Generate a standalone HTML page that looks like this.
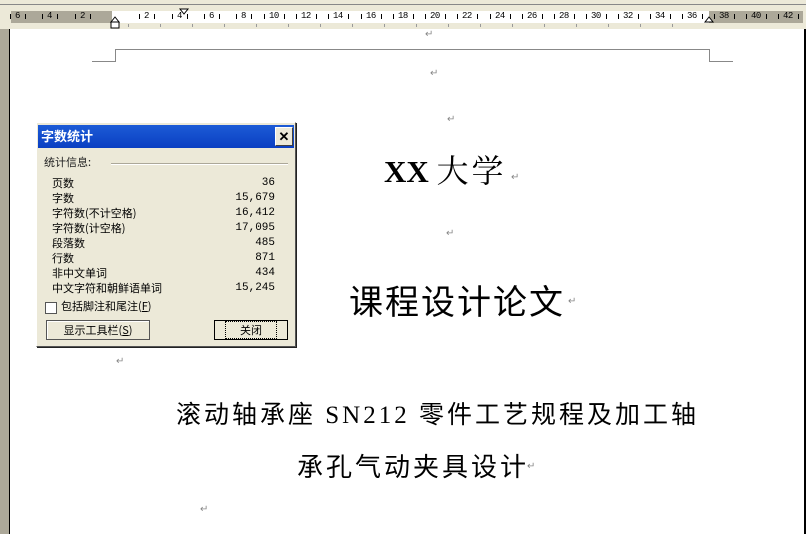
<html><head><style>
body{margin:0;width:806px;height:534px;overflow:hidden;background:#fff;position:relative;font-family:"Liberation Sans","Noto Sans CJK SC",sans-serif}
.a{position:absolute}
.pm{position:absolute;font-size:10px;color:#888;font-family:"Liberation Sans",sans-serif}
.rl{position:absolute;top:11px;font-size:9px;color:#000;font-family:"Liberation Mono",monospace;letter-spacing:-0.5px}
.dl{position:absolute;font-size:11px;font-family:"Noto Sans CJK SC",sans-serif;line-height:15px}
</style></head><body>
<div class="a" style="left:0;top:0;width:806px;height:29px;background:#ece9d8"></div>
<div class="a" style="left:0;top:4px;width:806px;height:1px;background:#888"></div>
<div class="a" style="left:11px;top:11px;width:101px;height:12px;background:#aca899"></div>
<div class="a" style="left:112px;top:11px;width:597px;height:12px;background:#fff"></div>
<div class="a" style="left:709px;top:11px;width:94px;height:12px;background:#aca899"></div>
<div class="a" style="left:0;top:29px;width:9px;height:505px;background:#aca899"></div>
<div class="a" style="left:9px;top:29px;width:1px;height:505px;background:#000"></div>
<div class="a" style="left:804px;top:29px;width:2px;height:505px;background:#000"></div>
<div id="ruler"></div>
<script>
var r=document.getElementById('ruler'),h='';
var labs=[[18,'6'],[50,'4'],[83,'2'],[147,'2'],[180,'4'],[212,'6'],[244,'8'],[272,'10'],[304,'12'],[336,'14'],[369,'16'],[401,'18'],[433,'20'],[465,'22'],[498,'24'],[530,'26'],[562,'28'],[594,'30'],[626,'32'],[658,'34'],[690,'36'],[722,'38'],[754,'40'],[786,'42']];
labs.forEach(function(l){h+='<div class="rl" style="left:'+(l[0]-3)+'px">'+l[1]+'</div>';h+='<div class="a" style="left:'+(l[0]-8)+'px;top:14px;width:1px;height:5px;background:#000"></div><div class="a" style="left:'+(l[0]+(l[1].length*5)+2)+'px;top:14px;width:1px;height:5px;background:#000"></div>';});
for(var x=128;x<700;x+=32)h+='<div class="a" style="left:'+x+'px;top:24px;width:1px;height:3px;background:#999"></div>';
r.innerHTML=h;
</script>
<svg class="a" style="left:108px;top:6px" width="720" height="26"><path d="M3 16 L7 11 L11 16 Z M3 16 H11 V22 H3 Z" fill="#fff" stroke="#000"/><path d="M72 3 H80 L76 8 Z" fill="#fff" stroke="#000"/><path d="M597 16 L601 11 L605 16 Z" fill="#fff" stroke="#000"/></svg>
<svg class="a" style="left:0;top:0" width="806" height="534"><path d="M92 61.5 H115.5 V49.5 H709.5 V61.5 H733" fill="none" stroke="#888"/></svg>
<div class="pm" style="left:425px;top:29px">↵</div>
<div class="pm" style="left:430px;top:68px">↵</div>
<div class="pm" style="left:447px;top:114px">↵</div>
<div class="a" style="left:384px;top:146px;font:bold 31px 'Liberation Serif','Noto Serif CJK SC',serif;white-space:nowrap">XX <span style="font-weight:normal;font-family:'Noto Serif CJK SC',serif;font-size:32px;letter-spacing:3px">大学</span></div>
<div class="pm" style="left:511px;top:172px">↵</div>
<div class="pm" style="left:446px;top:228px">↵</div>
<div class="a" style="left:349px;top:279px;font-size:34px;font-family:'Noto Sans CJK SC',sans-serif;letter-spacing:2px;line-height:42px;white-space:nowrap">课程设计论文</div>
<div class="pm" style="left:568px;top:296px">↵</div>
<div class="pm" style="left:116px;top:356px">↵</div>
<div class="a" style="left:176px;top:396px;font-size:25px;font-family:'Liberation Serif','Noto Sans CJK SC',serif;line-height:34px;white-space:nowrap;letter-spacing:3px"><span style="font-family:'Noto Sans CJK SC'">滚动轴承座</span> SN212 <span style="font-family:'Noto Sans CJK SC'">零件工艺规程及加工轴</span></div>
<div class="a" style="left:297px;top:449px;font-size:26px;font-family:'Noto Sans CJK SC',sans-serif;line-height:34px;letter-spacing:3px;white-space:nowrap">承孔气动夹具设计</div>
<div class="pm" style="left:527px;top:461px">↵</div>
<div class="pm" style="left:200px;top:504px">↵</div>

<div class="a" style="left:36px;top:122px;width:258px;height:223px;background:#ece9d8;border:1px solid #fff;border-right-color:#555;border-bottom-color:#555;box-shadow:1px 1px 0 #222"></div>
<div class="a" style="left:38px;top:125px;width:256px;height:23px;background:linear-gradient(#1c5bd6,#0a3fc2)"></div>
<div class="a" style="left:41px;top:127px;color:#fff;font-weight:bold;font-size:13px;font-family:'Noto Sans CJK SC',sans-serif;line-height:18px">字数统计</div>
<div class="a" style="left:275px;top:127px;width:16px;height:17px;background:#ece9d8;border:1px solid #fff;border-right-color:#404040;border-bottom-color:#404040;font:bold 13px 'Liberation Sans';text-align:center;line-height:17px">✕</div>
<div class="dl" style="left:44px;top:155px;color:#222">统计信息:</div>
<div class="a" style="left:111px;top:163px;width:177px;height:1px;background:#aca899;border-bottom:1px solid #fff"></div>
<div class="dl" style="left:52px;top:176px;line-height:15px">页数<br>字数<br>字符数(不计空格)<br>字符数(计空格)<br>段落数<br>行数<br>非中文单词<br>中文字符和朝鲜语单词</div>
<div class="dl" style="left:200px;top:176px;width:75px;text-align:right;font-family:'Liberation Mono',monospace;font-size:11px">36<br>15,679<br>16,412<br>17,095<br>485<br>871<br>434<br>15,245</div>
<div class="a" style="left:45px;top:302px;width:10px;height:10px;background:#fff;border:1px solid #555"></div>
<div class="dl" style="left:61px;top:299px">包括脚注和尾注(<u>F</u>)</div>
<div class="a" style="left:46px;top:320px;width:102px;height:18px;border:1px solid #555;background:#ece9d8;box-shadow:inset 1px 1px #fff;font-size:11px;font-family:'Noto Sans CJK SC';text-align:center;line-height:18px">显示工具栏(<u>S</u>)</div>
<div class="a" style="left:214px;top:320px;width:72px;height:18px;border:1px solid #000;background:#ece9d8;font-size:11px;font-family:'Noto Sans CJK SC';text-align:center;line-height:18px"><span style="outline:1px dotted #000;padding:0 14px">关闭</span></div>
</body></html>
